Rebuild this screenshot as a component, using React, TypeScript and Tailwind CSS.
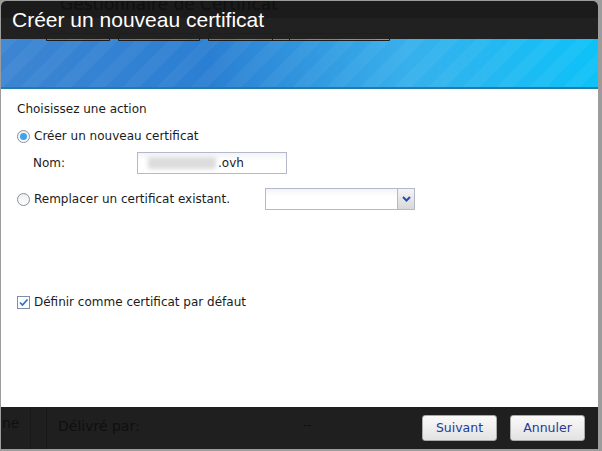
import React from 'react';

const font = { fontFamily: '"DejaVu Sans", Verdana, sans-serif' };

const Radio = ({ checked }: { checked?: boolean }) => (
  <span className="flex h-[13px] w-[13px] items-center justify-center rounded-full border border-[#8a8f99] bg-gradient-to-b from-[#eeeeee] to-white">
    {checked && <span className="h-[7px] w-[7px] rounded-full bg-[#3fa2ef]" />}
  </span>
);

const Check = () => (
  <span className="flex h-[13px] w-[13px] items-center justify-center border border-[#7f8da8] bg-white">
    <svg width="11" height="11" viewBox="0 0 11 11">
      <path d="M2 5.5 L4.5 8 L9.5 2.5" fill="none" stroke="#2a6fcf" strokeWidth="1.7" />
    </svg>
  </span>
);

const FooterButton = ({ label }: { label: string }) => (
  <button className="h-[26px] w-[75px] rounded-[3px] border border-[#a9a9a9] bg-gradient-to-b from-[#fafafa] to-[#e2e2e2] text-[12.5px] text-[#1d3a9a]">
    {label}
  </button>
);

const App = () => {
  return (
    <div className="h-[451px] w-[602px] overflow-hidden bg-[#9c9c9c] pl-[1px] pr-[4px] pt-[1px] pb-[2px]" style={font}>
      <div className="flex h-full flex-col overflow-hidden rounded-t-[5px] bg-white">
        {/* title bar */}
        <div className="relative h-[38px] bg-gradient-to-b from-[#1b1b1b] from-45% to-[#212121] to-45%">
          <span className="absolute left-[59px] top-[-7px] text-[17px] leading-[20px] text-[#101010]">Gestionnaire de Certificat</span>
          <div className="absolute left-[45px] top-[32px] h-[8px] w-[64px] rounded-t-[3px] border border-[#1d1d1d]" />
          <div className="absolute left-[117px] top-[32px] h-[8px] w-[82px] rounded-t-[3px] border border-[#1d1d1d]" />
          <div className="absolute left-[207px] top-[32px] h-[8px] w-[82px] rounded-t-[3px] border border-[#1d1d1d]" />
          <div className="absolute left-[271px] top-[32px] h-[8px] w-[118px] rounded-t-[3px] border border-[#1d1d1d]" />
          <h1 className="relative pl-[11px] pt-[7px] text-[21px] leading-[24px] text-white" style={{ fontFamily: '"Liberation Sans", Arial, sans-serif' }}>
            Créer un nouveau certificat
          </h1>
        </div>
        {/* banner */}
        <div className="h-[50px] border-b-2 border-[#1f7cab] [background:repeating-linear-gradient(135deg,rgba(255,255,255,0.045)_0px,rgba(255,255,255,0.045)_12px,rgba(255,255,255,0)_12px,rgba(255,255,255,0)_24px),linear-gradient(90deg,#3d85d2_0%,#2b7fd2_35%,#38b0ec_68%,#0cc2f8_100%)]" />
        {/* body */}
        <div className="flex flex-1 flex-col px-[16px] pt-[12px] text-[12px] text-[#1b1b1b]">
          <div className="leading-[16px]">Choisissez une action</div>
          <label className="mt-[11px] flex items-center gap-[4px] leading-[16px]">
            <Radio checked />
            <span>Créer un nouveau certificat</span>
          </label>
          <div className="mt-[8px] flex items-center">
            <span className="w-[120px] pl-[16px]">Nom:</span>
            <div className="flex h-[22px] w-[150px] items-center border border-[#b4b8c8] bg-gradient-to-b from-[#f2f4f6] to-white to-40% pl-[10px]">
              <span className="h-[12px] w-[68px] bg-[#dcdcdc] blur-[2px]" />
              <span className="ml-[2px]">.ovh</span>
            </div>
          </div>
          <div className="mt-[14px] flex items-center">
            <label className="flex w-[248px] items-center gap-[4px]">
              <Radio />
              <span>Remplacer un certificat existant.</span>
            </label>
            <div className="flex h-[22px] w-[150px] border border-[#b4b8c8] bg-gradient-to-b from-[#f2f4f6] to-white to-40%">
              <div className="flex-1" />
              <div className="flex w-[17px] items-center justify-center border-l border-[#b4b8c8] bg-gradient-to-b from-[#f4f4f4] to-[#d8d8d8]">
                <svg width="9" height="6" viewBox="0 0 9 6">
                  <path d="M1 1 L4.5 4.5 L8 1" fill="none" stroke="#1f4fbf" strokeWidth="2" />
                </svg>
              </div>
            </div>
          </div>
          <label className="mt-[83px] flex items-center gap-[4px]">
            <Check />
            <span>Définir comme certificat par défaut</span>
          </label>
        </div>
        {/* footer */}
        <div className="relative flex h-[42px] items-center justify-end gap-[13px] bg-[#1f1f1f] pr-[13px]">
          <span className="absolute left-[1px] top-[6px] text-[14px] text-[#0f0f0f]">ne</span>
          <div className="absolute left-[29px] top-0 h-full w-px bg-[#1a1a1a]" />
          <div className="absolute left-[45px] top-0 h-full w-px bg-[#171717]" />
          <span className="absolute left-[57px] top-[9px] text-[14px] text-[#0f0f0f]">Délivré par:</span>
          <span className="absolute left-[302px] top-[9px] text-[12px] text-[#0f0f0f]">--</span>
          <FooterButton label="Suivant" />
          <FooterButton label="Annuler" />
        </div>
      </div>
    </div>
  );
};

export default App;
